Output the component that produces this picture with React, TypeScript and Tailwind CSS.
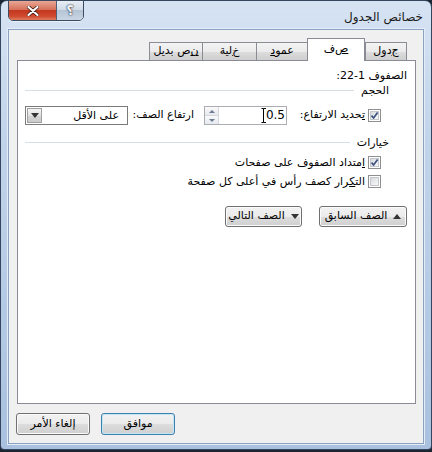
import React from 'react';

const font = "font-['DejaVu_Sans',sans-serif]";

function Check({ checked }: { checked?: boolean }) {
  return (
    <span className="flex h-[13px] w-[13px] shrink-0 items-center justify-center border border-[#8f8f8f] bg-white">
      <span className="relative h-[9px] w-[9px] border border-[#c3c6cb] bg-gradient-to-br from-[#d8dbdf] to-[#f8f8f8]">
        {checked && (
          <svg viewBox="0 0 9 9" className="absolute -left-[1px] -top-[1px] h-[9px] w-[9px]">
            <path d="M1.5 4.6 L3.6 7 L7.6 1.4" fill="none" stroke="#3d5281" strokeWidth="1.7" />
          </svg>
        )}
      </span>
    </span>
  );
}

function Tri({ up, className = '' }: { up?: boolean; className?: string }) {
  return (
    <svg viewBox="0 0 8 5" className={`h-[5px] w-[8px] ${className}`}>
      <path d={up ? 'M0 5 L4 0 L8 5 Z' : 'M0 0 L8 0 L4 5 Z'} fill="#333" />
    </svg>
  );
}

function WinButton({ children, def, className = '' }: { children: React.ReactNode; def?: boolean; className?: string }) {
  return (
    <div
      className={`flex items-center justify-center rounded-[3px] border ${
        def ? 'border-[#3c7fb1] shadow-[inset_0_0_0_1px_#c5e6f7]' : 'border-[#707070] shadow-[inset_0_0_0_1px_#fbfbfb]'
      } bg-[linear-gradient(#f2f2f2_0%,#ebebeb_50%,#dddddd_50%,#cfcfcf_100%)] ${className}`}
    >
      {children}
    </div>
  );
}

function GroupRow({ label }: { label: string }) {
  return (
    <div className="flex h-[13px] items-center pl-[7px] pr-[26px]">
      <span className="leading-[13px]">{label}</span>
      <span className="ml-0 mr-[7px] h-px flex-1 bg-[#d5dfe5]" />
    </div>
  );
}

const tabs: { label: React.ReactNode; w: string; active?: boolean }[] = [
  { label: <><span className="underline">ج</span>دول</>, w: 'w-[42px]' },
  { label: <><span className="underline">ص</span>ف</>, w: 'w-[58px]', active: true },
  { label: <>عمو<span className="underline">د</span></>, w: 'w-[52px]' },
  { label: <><span className="underline">خ</span>لية</>, w: 'w-[55px]' },
  { label: <><span className="underline">ن</span>ص بديل</>, w: 'w-[54px]' },
];

export default function App() {
  return (
    <div className={`h-[452px] w-[432px] bg-[#1c2633] text-[11px] text-black ${font}`} dir="rtl">
      <div className="flex h-[450px] w-[432px] flex-col rounded-t-[7px] rounded-b-[4px] border border-[#34465e] bg-[linear-gradient(#d6e3f3,#c2d4ea_30%,#a9c1df)]">
        {/* title bar */}
        <div className="flex h-[28px] items-start justify-between">
          <div className="mr-[8px] mt-[9px] text-[12px] leading-[15px] text-[#1a1a1a]">خصائص الجدول</div>
          <div className="-mt-px ml-[7px] flex h-[21px] overflow-hidden rounded-b-[5px] border border-[#3b4a5e] shadow-[0_1px_0_#e8f0f8]">
            <div className="flex w-[27px] items-center justify-center border-l border-[#4f6078] bg-[linear-gradient(#e6edf5,#cfdae6_50%,#b6c5d6_50%,#c8d5e3)] text-[13px] font-bold leading-none text-[#f4f7fa] [text-shadow:0_0_2px_#223,0_0_1px_#223]">
              ؟
            </div>
            <div className="flex w-[47px] items-center justify-center bg-[linear-gradient(#e9a795,#d6715a_45%,#c3381f_50%,#cf4a2f_80%,#e07b5c)]">
              <svg viewBox="0 0 12 10" className="h-[10px] w-[12px]">
                <path d="M1.5 1 L10.5 9 M10.5 1 L1.5 9" stroke="#3b1810" strokeWidth="3.6" strokeLinecap="round" />
                <path d="M1.5 1 L10.5 9 M10.5 1 L1.5 9" stroke="#ffffff" strokeWidth="2.2" strokeLinecap="round" />
              </svg>
            </div>
          </div>
        </div>

        {/* client area */}
        <div className="mx-[7px] flex h-[415px] flex-col border border-[#8aa3c2] bg-[#f0f0f0] shadow-[0_0_0_1px_#e4edf7]">
          {/* tab strip */}
          <div className="ml-[8px] mr-[7px] flex h-[30px] items-end pr-[9px] pt-[8px]">
            {tabs.map((t, i) =>
              t.active ? (
                <div
                  key={i}
                  className={`relative z-10 -mb-px flex h-[23px] ${t.w} items-center justify-center border border-b-0 border-[#898c95] bg-white pb-[2px]`}
                >
                  {t.label}
                </div>
              ) : (
                <div
                  key={i}
                  className={`-mr-px flex h-[18px] ${t.w} items-center justify-center border border-b-0 border-[#898c95] bg-[linear-gradient(#f3f3f3,#ebebeb_50%,#dddddd_50%,#cfcfcf)] first:mr-0`}
                >
                  {t.label}
                </div>
              )
            )}
          </div>

          {/* panel */}
          <div className="ml-[8px] mr-[7px] flex h-[344px] flex-col border border-[#898c95] bg-white">
            <div className="mt-[8px] h-[13px] pr-[8px] leading-[13px]">الصفوف 1-22:</div>
            <div className="mt-[2px]">
              <GroupRow label="الحجم" />
            </div>

            <div className="mt-[9px] flex h-[19px] items-center pl-[7px] pr-[34px]">
              <div className="flex w-[94px] items-center">
                <Check checked />
                <span className="mr-[3px] whitespace-nowrap">
                  <span className="underline">ت</span>حديد الارتفاع:
                </span>
              </div>
              <div className="relative flex h-[19px] w-[83px] items-center border border-[#abadb3] bg-white">
                <span className="flex-1 pr-[1px] text-right text-[12px] leading-[13px]" dir="ltr">0.5</span>
                <div className="flex h-full w-[14px] flex-col border-r border-[#d5d8de]">
                  <div className="flex flex-1 items-center justify-center border-b border-[#d5d8de] bg-[linear-gradient(#fafafa,#e6e9ee)]">
                    <svg viewBox="0 0 6 3" className="h-[3px] w-[6px]"><path d="M0 3 L3 0 L6 3 Z" fill="#6b7c93" /></svg>
                  </div>
                  <div className="flex flex-1 items-center justify-center bg-[linear-gradient(#fafafa,#e6e9ee)]">
                    <svg viewBox="0 0 6 3" className="h-[3px] w-[6px]"><path d="M0 0 L6 0 L3 3 Z" fill="#6b7c93" /></svg>
                  </div>
                </div>
                <svg viewBox="0 0 6 15" className="absolute left-[56px] top-[1px] h-[15px] w-[6px]">
                  <path d="M0.5 0.5 H2.5 V14.5 H0.5 M2.5 0.5 H5 M2.5 14.5 H5" fill="none" stroke="#000" strokeWidth="1" />
                </svg>
              </div>
              <div className="w-[76px] whitespace-nowrap pr-[10px]">ارتفاع الصف:</div>
              <div className="flex h-[19px] w-[103px] items-center border border-[#7a7a7a] bg-white">
                <span className="flex-1 pr-[8px] leading-[13px]">على الأقل</span>
                <div className="m-px flex h-[15px] w-[15px] items-center justify-center border border-[#a0a0a0] bg-[linear-gradient(#f4f4f4,#e2e2e2_50%,#d4d4d4_50%,#cccccc)]">
                  <Tri />
                </div>
              </div>
            </div>

            <div className="mt-[11px]">
              <GroupRow label="خيارات" />
            </div>

            <div className="mt-[7px] flex h-[13px] items-center pr-[34px]">
              <Check checked />
              <span className="mr-[3px] whitespace-nowrap leading-[13px]">
                <span className="underline">ا</span>متداد الصفوف على صفحات
              </span>
            </div>
            <div className="mt-[6px] flex h-[13px] items-center pr-[34px]">
              <Check />
              <span className="mr-[3px] whitespace-nowrap leading-[13px]">
                الت<span className="underline">ك</span>رار كصف رأس في أعلى كل صفحة
              </span>
            </div>

            <div className="mt-[18px] flex gap-[17px] pr-[8px]">
              <WinButton className="h-[21px] w-[88px] gap-[6px]">
                <Tri up />
                <span>الصف السابق</span>
              </WinButton>
              <WinButton className="h-[21px] w-[77px] gap-[6px]">
                <Tri />
                <span>الصف التالي</span>
              </WinButton>
            </div>
          </div>

          {/* bottom buttons */}
          <div className="mt-[9px] flex justify-end gap-[11px] pl-[7px]">
            <WinButton def className="h-[22px] w-[74px]">
              موافق
            </WinButton>
            <WinButton className="h-[22px] w-[74px]">إلغاء الأمر</WinButton>
          </div>
        </div>
      </div>
    </div>
  );
}
